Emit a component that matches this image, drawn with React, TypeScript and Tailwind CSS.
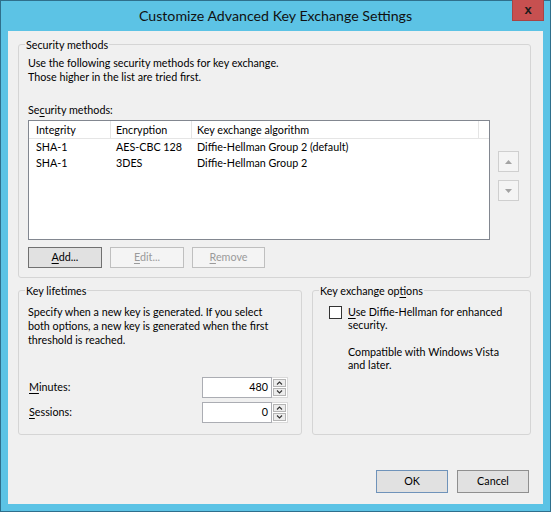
import React from "react";

function U({ children }: { children: React.ReactNode }) {
    return <span className="underline decoration-1 underline-offset-[2px]">{children}</span>;
}

function Group({ title, className, children }: { title: React.ReactNode; className?: string; children: React.ReactNode }) {
    return (
        <fieldset className={"rounded-[3px] border border-[#d5d5d5] " + (className ?? "")}>
            <legend className="ml-[6px] px-[1px] leading-[13px]">{title}</legend>
            {children}
        </fieldset>
    );
}

function Chevron({ up }: { up: boolean }) {
    return (
        <svg width="7" height="4" viewBox="0 0 7 4">
            <path d={up ? "M1 3.5 L3.5 1 L6 3.5" : "M1 0.5 L3.5 3 L6 0.5"} fill="none" stroke="#333" strokeWidth="1.1" />
        </svg>
    );
}

function Spinner({ value }: { value: string }) {
    return (
        <div className="flex h-[21px]">
            <div className="flex w-[70px] items-center justify-end border border-[#abadb3] bg-white pr-[3px]">{value}</div>
            <div className="flex w-[16px] flex-col gap-[1px] border border-l-0 border-[#d9d9d9] bg-white p-[1px]">
                <div className="flex flex-1 items-center justify-center border border-[#b5b5b5] bg-[#ececec]">
                    <Chevron up />
                </div>
                <div className="flex flex-1 items-center justify-center border border-[#b5b5b5] bg-[#ececec]">
                    <Chevron up={false} />
                </div>
            </div>
        </div>
    );
}

function ListArrow({ up }: { up: boolean }) {
    return (
        <div className="flex h-[21px] w-[21px] items-center justify-center border border-[#cfcfcf] bg-[#f4f4f4]">
            <svg width="7" height="4" viewBox="0 0 7 4">
                <path d={up ? "M0 4 L3.5 0 L7 4 Z" : "M0 0 L3.5 4 L7 0 Z"} fill="#a3a3a3" />
            </svg>
        </div>
    );
}

const methods = [
    { integrity: "SHA-1", encryption: "AES-CBC 128", algo: "Diffie-Hellman Group 2 (default)" },
    { integrity: "SHA-1", encryption: "3DES", algo: "Diffie-Hellman Group 2" },
];

export default function App() {
    return (
        <div className="flex h-[512px] w-[551px] flex-col border border-[#2f6f8c] bg-[#5cc3e5] font-['Lato','Liberation_Sans',sans-serif] text-[10.75px] text-black">
            {/* barra de título */}
            <div className="flex h-[30px] shrink-0 items-start">
                <div className="w-[38px]" />
                <div className="flex h-[30px] flex-1 items-center justify-center pb-[1px] text-[14.2px] text-[#111]">
                    Customize Advanced Key Exchange Settings
                </div>
                <div className="-mt-[1px] mr-[6px] flex h-[21px] w-[32px] items-center justify-center border border-t-0 border-[#a84444] bg-[#c75050] font-['Liberation_Sans',sans-serif] text-[13px] font-bold text-[#1b1b1b]">
                    x
                </div>
            </div>

            {/* área do cliente */}
            <div className="ml-[7px] flex h-[473px] w-[535px] flex-col bg-[#f0f0f0] pl-[10px] pr-[12px]">
                <Group title="Security methods" className="mt-[7px]">
                    <div className="pb-[9px] pl-[9px]">
                        <div className="mt-[5px] leading-[14px]">
                            Use the following security methods for key exchange.
                            <br />
                            Those higher in the list are tried first.
                        </div>
                        <div className="mt-[19px] leading-[13px]">
                            Se<U>c</U>urity methods:
                        </div>
                        <div className="mt-[4px] flex">
                            <div className="h-[120px] w-[462px] border border-[#828790] bg-white">
                                <div className="flex h-[18px] border-b border-[#e5e5e5] leading-[17px]">
                                    <div className="w-[82px] border-r border-[#e5e5e5] pl-[7px]">Integrity</div>
                                    <div className="w-[81px] border-r border-[#e5e5e5] pl-[5px]">Encryption</div>
                                    <div className="w-[287px] border-r border-[#e5e5e5] pl-[5px]">Key exchange algorithm</div>
                                </div>
                                {methods.map((m, i) => (
                                    <div key={i} className="flex h-[16px] items-center leading-[16px]">
                                        <div className="w-[82px] pl-[7px]">{m.integrity}</div>
                                        <div className="w-[81px] pl-[5px]">{m.encryption}</div>
                                        <div className="w-[287px] pl-[5px]">{m.algo}</div>
                                    </div>
                                ))}
                            </div>
                            <div className="ml-[8px] flex flex-col gap-[8px] pt-[31px]">
                                <ListArrow up />
                                <ListArrow up={false} />
                            </div>
                        </div>
                        <div className="mt-[7px] flex gap-[8px]">
                            <div className="flex h-[21px] w-[74px] items-center justify-center border border-[#707070] bg-[#e1e1e1]">
                                <span>
                                    <U>A</U>dd...
                                </span>
                            </div>
                            <div className="flex h-[21px] w-[74px] items-center justify-center border border-[#bfbfbf] bg-[#f4f4f4] text-[#9a9a9a]">
                                <span>
                                    <U>E</U>dit...
                                </span>
                            </div>
                            <div className="flex h-[21px] w-[73px] items-center justify-center border border-[#bfbfbf] bg-[#f4f4f4] text-[#9a9a9a]">
                                <span>
                                    <U>R</U>emove
                                </span>
                            </div>
                        </div>
                    </div>
                </Group>

                <div className="mt-[6px] flex gap-[10px]">
                    <Group title="Key lifetimes" className="w-[284px]">
                        <div className="pb-[11px] pl-[9px]">
                            <div className="mt-[8px] leading-[14px]">
                                Specify when a new key is generated. If you select
                                <br />
                                both options, a new key is generated when the first
                                <br />
                                threshold is reached.
                            </div>
                            <div className="mt-[30px] flex items-center">
                                <div className="w-[174px] pl-[1px]">
                                    <U>M</U>inutes:
                                </div>
                                <Spinner value="480" />
                            </div>
                            <div className="mt-[4px] flex items-center">
                                <div className="w-[174px] pl-[1px]">
                                    <U>S</U>essions:
                                </div>
                                <Spinner value="0" />
                            </div>
                        </div>
                    </Group>

                    <Group
                        title={
                            <>
                                Key exchange op<U>t</U>ions
                            </>
                        }
                        className="w-[219px]"
                    >
                        <div className="mt-[8px] flex items-start pl-[16px]">
                            <div className="mt-[1px] h-[13px] w-[13px] shrink-0 border border-[#333] bg-white" />
                            <div className="ml-[6px] leading-[13px]">
                                <U>U</U>se Diffie-Hellman for enhanced
                                <br />
                                security.
                                <div className="mt-[14px]">
                                    Compatible with Windows Vista
                                    <br />
                                    and later.
                                </div>
                            </div>
                        </div>
                    </Group>
                </div>

                <div className="mb-[11px] mr-[2px] mt-auto flex justify-end gap-[9px]">
                    <div className="flex h-[23px] w-[72px] items-center justify-center border border-[#6f93ba] bg-[#e1e1e1]">OK</div>
                    <div className="flex h-[23px] w-[72px] items-center justify-center border border-[#8f8f8f] bg-[#e1e1e1]">Cancel</div>
                </div>
            </div>
        </div>
    );
}
